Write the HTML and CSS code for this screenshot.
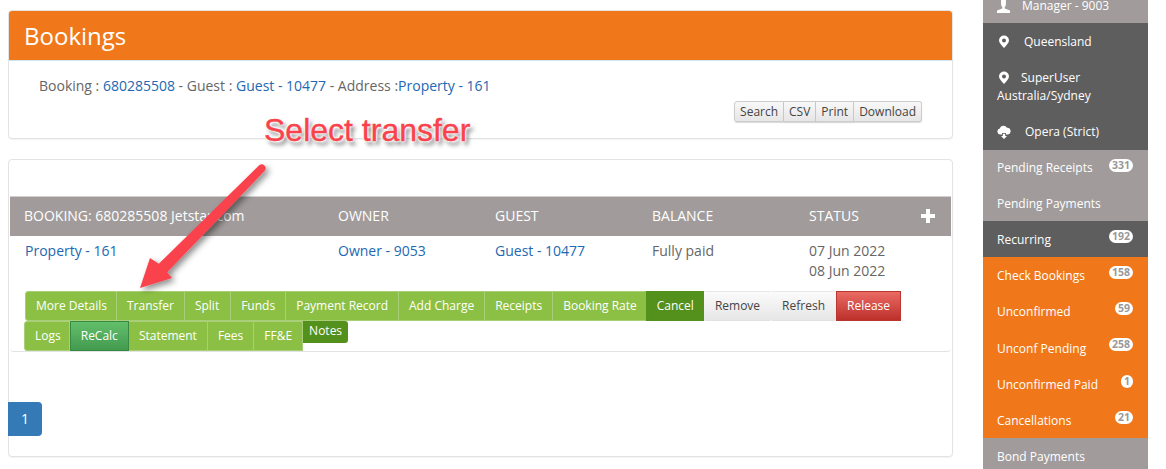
FILE: index.html

```html
<!DOCTYPE html>
<html lang="en">
<head>
<meta charset="UTF-8" />
<title>Bookings</title>
<link rel="stylesheet" href="styles.css">
</head>
<body>

<div class="page">
  <div class="main">
    <div class="card summary">
      <div class="card-title">Bookings</div>
      <div class="summary-text">
        Booking : <a href="#">680285508</a> - Guest : <a href="#">Guest - 10477</a> - Address :<a href="#">Property - 161</a>
      </div>
      <div class="tools">
        <button class="tool">Search</button><button class="tool">CSV</button><button class="tool">Print</button><button class="tool">Download</button>
      </div>
    </div>

    <div class="card results">
      <div class="booking">
        <div class="booking-head">
          <div class="col col-a">BOOKING: 680285508 Jetstar.com</div>
          <div class="col col-b">OWNER</div>
          <div class="col col-c">GUEST</div>
          <div class="col col-d">BALANCE</div>
          <div class="col col-e">STATUS</div>
          <div class="plus"></div>
        </div>
        <div class="booking-row">
          <div class="col col-a"><a href="#">Property - 161</a></div>
          <div class="col col-b"><a href="#">Owner - 9053</a></div>
          <div class="col col-c"><a href="#">Guest - 10477</a></div>
          <div class="col col-d">Fully paid</div>
          <div class="col col-e">07 Jun 2022<br>08 Jun 2022</div>
        </div>
        <div class="actions first">
          <a class="btn green">More Details</a>
          <a class="btn green">Transfer</a>
          <a class="btn green split">Split</a>
          <a class="btn green">Funds</a>
          <a class="btn green">Payment Record</a>
          <a class="btn green">Add Charge</a>
          <a class="btn green">Receipts</a>
          <a class="btn green">Booking Rate</a>
          <a class="btn dark">Cancel</a>
          <a class="btn grey">Remove</a>
          <a class="btn grey">Refresh</a>
          <a class="btn red">Release</a>
        </div>
        <div class="actions second">
          <a class="btn green">Logs</a>
          <a class="btn teal">ReCalc</a>
          <a class="btn green">Statement</a>
          <a class="btn green">Fees</a>
          <a class="btn green">FF&amp;E</a>
          <a class="notes">Notes</a>
        </div>
      </div>
      <div class="pager"><a class="page-no">1</a></div>
    </div>

    <div class="callout">Select transfer</div>
    <svg class="arrow" width="150" height="145" viewBox="0 0 150 145">
      <defs>
        <filter id="shade" x="-20%" y="-20%" width="140%" height="140%">
          <feDropShadow dx="3" dy="3" stdDeviation="3" flood-color="#000" flood-opacity="0.45" />
        </filter>
      </defs>
      <path filter="url(#shade)" fill="#f9424b" d="M10 133 L20 103 L28.800 108.800 L129.200 10.200 A4 4 0 0 1 134.800 15.800 L37.200 117.200 L42 123 Z" />
    </svg>
  </div>

  <div class="side">
    <div class="side-item muted"><svg class="ico" width="13" height="13" viewBox="0 0 16 16"><path d="M5 0h6v5c0 2-1 3-1.500 3.500v2L16 13v3H0v-3l6.500-2.500v-2C6 8 5 7 5 5z" fill="#fff"/></svg><span class="gap">Manager - 9003</span></div>
    <div class="side-group">
      <div class="side-item"><svg class="ico" width="13" height="15" viewBox="0 0 13 15"><path d="M7 1.500a5 5 0 0 1 5 5c0 2.500-2.500 4.500-5 7.500-2.500-3-5-5-5-7.500a5 5 0 0 1 5-5zm0 3a2 2 0 1 0 0 4 2 2 0 0 0 0-4z" fill="#fff" fill-rule="evenodd"/></svg><span class="gap2">Queensland</span></div>
      <div class="side-item wrap"><svg class="ico" width="13" height="15" viewBox="0 0 13 15"><path d="M7 1.500a5 5 0 0 1 5 5c0 2.500-2.500 4.500-5 7.500-2.500-3-5-5-5-7.500a5 5 0 0 1 5-5zm0 3a2 2 0 1 0 0 4 2 2 0 0 0 0-4z" fill="#fff" fill-rule="evenodd"/></svg><span class="gap3">SuperUser</span><br>Australia/Sydney</div>
      <div class="side-item last"><svg class="ico" width="14" height="14" viewBox="0 0 14 14"><path d="M3 9.500a3 3 0 0 1-.3-5.900A4 4 0 0 1 10 2.800a3.400 3.400 0 0 1 1 6.700H9L9 8H5v1.500z M5.800 8.800h2.400V11H10l-3 3-3-3h1.800z" fill="#fff"/></svg><span class="gap4">Opera (Strict)</span></div>
    </div>
    <div class="side-item muted short">Pending Receipts<span class="badge">331</span></div>
    <div class="side-item muted">Pending Payments</div>
    <div class="side-item slate">Recurring<span class="badge">192</span></div>
    <div class="side-item orange">Check Bookings<span class="badge">158</span></div>
    <div class="side-item orange">Unconfirmed<span class="badge">59</span></div>
    <div class="side-item orange tall">Unconf Pending<span class="badge">258</span></div>
    <div class="side-item orange">Unconfirmed Paid<span class="badge">1</span></div>
    <div class="side-item orange">Cancellations<span class="badge">21</span></div>
    <div class="side-item muted">Bond Payments</div>
  </div>
</div>

</body>
</html>
```

FILE: styles.css

```css
html, body {
  margin: 0;
  padding: 0;
  height: 469px;
  overflow: hidden;
  background: #fff;
}
body {
  font-family: "Open Sans", sans-serif;
  font-size: 14px;
  color: #666;
}
a {
  color: #2268b2;
  text-decoration: none;
}
.page {
  display: flex;
  align-items: flex-start;
  padding-left: 8px;
}
.main {
  position: relative;
  width: 945px;
  padding-top: 10px;
}
.card {
  background: #fff;
  border: 1px solid #e3e3e3;
  border-radius: 4px;
  box-shadow: 0 1px 1px rgba(0,0,0,0.05);
  box-sizing: border-box;
}
.summary {
  height: 129px;
  margin-bottom: 20px;
  overflow: hidden;
}
.card-title {
  background: #f0781a;
  color: #fff;
  font-size: 24px;
  line-height: 50px;
  height: 50px;
  padding-left: 15px;
  border-bottom: 1px solid #cfe6ee;
  box-sizing: border-box;
}
.summary-text {
  padding: 15px 30px 0;
  line-height: 20px;
}
.tools {
  display: flex;
  justify-content: flex-end;
  margin: 5px 30px 0 0;
}
.tool {
  font-family: inherit;
  font-size: 12px;
  color: #444;
  line-height: 17px;
  height: 21px;
  padding: 0 5px;
  border: 1px solid #ccc;
  border-left-width: 0;
  background: linear-gradient(#f8f8f8, #e6e6e6);
  box-shadow: 0 1px 1px rgba(0,0,0,0.15);
}
.tool:first-child {
  border-left-width: 1px;
  border-radius: 3px 0 0 3px;
}
.tool:last-child {
  border-radius: 0 3px 3px 0;
}
.results {
  height: 298px;
  padding-top: 36px;
}
.booking {
  margin: 0 1px;
  height: 155px;
  border-bottom: 1px solid #e3e3e3;
  border-radius: 0 0 4px 4px;
}
.booking-head, .booking-row {
  display: flex;
  position: relative;
}
.booking-head {
  background: #a19c9b;
  color: #fff;
  height: 40px;
  line-height: 38px;
  padding-left: 14px;
  border-top: 1px solid #d0d0d0;
  box-sizing: border-box;
}
.booking-row {
  padding: 5px 0 0 15px;
  line-height: 20px;
  height: 50px;
}
.booking-row .col-a { width: 313px; }
.col-a { width: 314px; }
.col-b { width: 157px; }
.col-c { width: 157px; }
.col-d { width: 157px; }
.col-e { width: 110px; }
.plus {
  position: absolute;
  right: 16px;
  top: 12px;
  width: 14px;
  height: 14px;
  background:
    linear-gradient(#fff, #fff) center / 14px 4px no-repeat,
    linear-gradient(#fff, #fff) center / 4px 14px no-repeat;
}
.actions {
  display: flex;
  align-items: flex-start;
  font-size: 12px;
}
.first { padding-left: 15px; }
.second { padding-left: 14px; }
.btn {
  height: 30px;
  line-height: 28px;
  padding: 0 10px;
  border: 1px solid transparent;
  box-sizing: border-box;
  white-space: nowrap;
}
.green {
  background: #8cc044;
  color: #fff;
  border-color: #a9d078;
  border-left-width: 0;
}
.first .green:first-child, .second .green:first-child {
  border-left-width: 1px;
  border-radius: 3px 0 0 3px;
  padding-right: 9px;
}
.second .green:first-child { padding-right: 8px; }
.first .split { padding-right: 11px; }
.dark {
  background: #53901c;
  color: #fff;
  margin-left: -2px;
  padding-right: 9px;
}
.grey {
  background: linear-gradient(#fbfbfb, #e6e6e6);
  color: #444;
  border-top-color: #e8e8e8;
  border-bottom-color: #e2e2e2;
}
.red {
  background: linear-gradient(#eb6a64, #bd302a);
  color: #fff;
  border-color: #b83530;
}
.teal {
  background: linear-gradient(#63bf6b, #439a4f);
  color: #fff;
  border-color: #368a43;
}
.notes {
  background: #53901c;
  color: #fff;
  height: 22px;
  line-height: 20px;
  padding: 0 6px;
  border-radius: 0 3px 3px 0;
}
.pager {
  margin: 50px 0 0 -1px;
}
.page-no {
  display: block;
  width: 34px;
  height: 34px;
  line-height: 34px;
  text-align: center;
  background: #337ab7;
  color: #fff;
  border-radius: 0 4px 4px 0;
}
.callout {
  position: absolute;
  left: 256px;
  top: 110px;
  font-family: "Liberation Sans", sans-serif;
  font-size: 32px;
  line-height: 40px;
  color: #f9424b;
  -webkit-text-stroke: 0.4px #f9424b;
  text-shadow: 0 0 2px #fff, 0 0 2px #fff, 0 0 3px #fff, 0 0 3px #fff, 3px 4px 4px rgba(0,0,0,0.55);
}
.arrow {
  position: absolute;
  left: 122px;
  top: 155px;
}
.side {
  width: 165px;
  margin: -13px 0 0 30px;
  color: #fff;
  font-size: 12px;
  flex: none;
}
.side-item {
  position: relative;
  height: 36px;
  line-height: 38px;
  padding-left: 14px;
  box-sizing: border-box;
}
.side-group { background: #5f5e5e; }
.side-group .wrap {
  height: 54px;
  padding-top: 10px;
  line-height: 18px;
}
.side-group .last { height: 37px; }
.short { height: 35px; line-height: 35px; }
.tall { height: 37px; line-height: 40px; }
.muted { background: #a19c9b; }
.slate { background: #5f5e5e; }
.orange { background: #f0781a; }
.ico {
  vertical-align: -3px;
}
.gap { margin-left: 12px; }
.gap2 { margin-left: 14px; }
.gap3 { margin-left: 11px; }
.gap4 { margin-left: 14px; }
.badge {
  position: absolute;
  right: 15px;
  top: 9px;
  background: #fff;
  color: #999;
  font-size: 10.5px;
  font-weight: 700;
  line-height: 13px;
  padding: 0 3px;
  border-radius: 7px;
}
```
